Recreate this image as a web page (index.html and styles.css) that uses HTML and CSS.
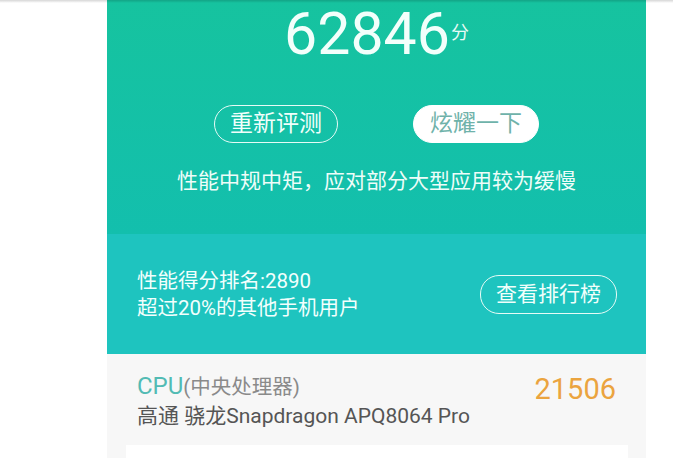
FILE: index.html
```html
<!DOCTYPE html>
<html lang="zh-CN">
<head>
<meta charset="utf-8">
<title>跑分结果</title>
<link rel="stylesheet" href="styles.css">
</head>
<body>
<div class="topshade"></div>
<div class="panel">
  <section class="hero">
    <div class="score">
      <span class="score-num">62846</span>
      <span class="score-unit">分</span>
    </div>
    <div class="actions">
      <button class="pill pill-outline">重新评测</button>
      <button class="pill pill-solid">炫耀一下</button>
    </div>
    <p class="verdict">性能中规中矩，应对部分大型应用较为缓慢</p>
  </section>
  <section class="rank">
    <div class="rank-text">
      <div>性能得分排名:2890</div>
      <div>超过20%的其他手机用户</div>
    </div>
    <button class="pill pill-outline pill-rank">查看排行榜</button>
  </section>
  <section class="detail">
    <div class="detail-row">
      <div class="detail-info">
        <div class="detail-title"><span class="cpu">CPU</span><span class="cpu-sub">(中央处理器)</span></div>
        <div class="detail-chip">高通 骁龙Snapdragon APQ8064 Pro</div>
      </div>
      <div class="detail-score">21506</div>
    </div>
    <div class="detail-card"></div>
  </section>
</div>
</body>
</html>
```

FILE: styles.css
```css
html, body {
  margin: 0;
  padding: 0;
  background: #ffffff;
  font-family: Roboto, "Noto Sans CJK SC", "Noto Sans", sans-serif;
  overflow: hidden;
}

.topshade {
  position: absolute;
  top: 0;
  left: 0;
  right: 0;
  height: 3px;
  background: linear-gradient(rgba(0, 0, 0, 0.16), rgba(0, 0, 0, 0));
  z-index: 5;
}

.panel {
  margin-left: 107px;
  width: 539px;
  display: flex;
  flex-direction: column;
}

.hero {
  height: 234px;
  background: linear-gradient(180deg, #16c39f 0%, #13bfad 100%);
  display: flex;
  flex-direction: column;
  align-items: center;
  color: #ffffff;
}

.score {
  display: flex;
  align-items: flex-start;
  padding-top: 4px;
}

.score-num {
  font-size: 59px;
  line-height: 60px;
  font-weight: 400;
  color: #f2fffb;
}

.score-unit {
  font-size: 18px;
  line-height: 20px;
  margin-top: 19px;
  margin-left: 1px;
  color: #e8fbf6;
}

.actions {
  display: flex;
  gap: 75px;
  margin-top: 41px;
}

.pill {
  font-family: Roboto, "Noto Sans CJK SC", sans-serif;
  height: 38px;
  border-radius: 19px;
  padding: 0 15px;
  font-size: 23px;
  line-height: 34px;
  background: transparent;
  color: #f0fffb;
  border: 1.5px solid #e6fbf6;
  cursor: pointer;
}

.pill-solid {
  background: #ffffff;
  color: #6fb2aa;
  border-color: #ffffff;
  padding: 0 16px;
}

.verdict {
  margin: 24px 0 0 0;
  font-size: 21px;
  line-height: 28px;
  color: #eefdf9;
}

.rank {
  height: 120px;
  background: #1ec4bf;
  display: flex;
  align-items: center;
  justify-content: space-between;
  padding: 0 29px 0 30px;
  color: #f2fffd;
}

.rank-text {
  font-size: 20.5px;
  line-height: 27px;
  margin-top: 1px;
}

.pill-rank {
  height: 39px;
  font-size: 21px;
  padding: 0 15px;
}

.detail {
  background: #f7f7f7;
  height: 120px;
  display: flex;
  flex-direction: column;
}

.detail-row {
  display: flex;
  justify-content: space-between;
  align-items: flex-start;
  padding: 17px 30px 0 30px;
}

.detail-title {
  font-size: 20.5px;
  line-height: 30px;
}

.cpu {
  font-size: 24px;
  color: #52bbb4;
}

.cpu-sub {
  color: #8a8a8a;
}

.detail-chip {
  font-size: 21px;
  line-height: 28px;
  color: #555555;
}

.detail-score {
  font-size: 29px;
  line-height: 32px;
  color: #eba43f;
  margin-top: 2px;
}

.detail-card {
  margin: 15px 18px 0 19px;
  height: 40px;
  background: #ffffff;
}
```
